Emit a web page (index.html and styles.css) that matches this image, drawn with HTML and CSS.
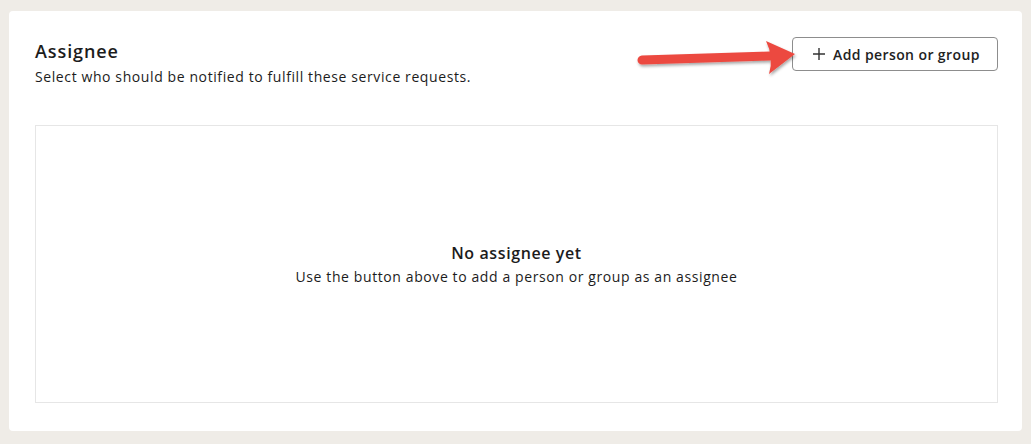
FILE: index.html
```html
<!DOCTYPE html>
<html>
<head>
    <title>Assignee</title>
    <link rel="stylesheet" href="styles.css">
</head>
<body>
    <div class="page">
        <div class="card">
            <div class="header">
                <div class="heading">
                    <h2 class="title">Assignee</h2>
                    <p class="subtitle">Select who should be notified to fulfill these service requests.</p>
                </div>
                <button class="add-button">
                    <svg class="plus" width="14" height="14" viewBox="0 0 14 14">
                        <path d="M7 1v12M1 7h12" stroke="#333" stroke-width="1.4" fill="none"/>
                    </svg>
                    Add person or group
                </button>
            </div>
            <div class="empty-box">
                <h3 class="empty-title">No assignee yet</h3>
                <p class="empty-text">Use the button above to add a person or group as an assignee</p>
            </div>
        </div>

        <!-- annotation arrow pointing at the button -->
        <svg class="arrow" width="180" height="50" viewBox="0 0 180 50">
            <defs>
                <filter id="shadow" x="-10%" y="-30%" width="130%" height="180%">
                    <feDropShadow dx="1" dy="2" stdDeviation="1.5" flood-color="#000" flood-opacity="0.35"/>
                </filter>
            </defs>
            <g filter="url(#shadow)">
                <line x1="12" y1="26" x2="140" y2="22" stroke="#ec4a41" stroke-width="9" stroke-linecap="round"/>
                <path d="M136 7 L165 20 L139 40 Q144 23 136 7 Z" fill="#ec4a41"/>
            </g>
        </svg>
    </div>
</body>
</html>
```

FILE: styles.css
```css
body {
    margin: 0;
    background-color: #efece7;
    font-family: 'Open Sans', sans-serif;
    color: #1c1c1c;
}

.page {
    position: relative;
    padding: 11px 9px 13px 9px;
}

.card {
    background-color: #fff;
    border-radius: 4px;
    padding: 26px 24px 28px 26px;
}

.header {
    display: flex;
    justify-content: space-between;
    align-items: flex-start;
}

.title {
    margin: 2px 0 0 0;
    font-size: 18px;
    line-height: 24px;
    font-weight: 600;
    letter-spacing: 0.9px;
}

.subtitle {
    margin: 4px 0 0 0;
    font-size: 14px;
    line-height: 20px;
    letter-spacing: 0.6px;
}

.add-button {
    display: flex;
    align-items: center;
    gap: 7px;
    width: 206px;
    height: 34px;
    padding: 0 0 0 19px;
    background-color: #fff;
    border: 1px solid #8d8d8d;
    border-radius: 4px;
    font-family: 'Open Sans', sans-serif;
    font-size: 14px;
    font-weight: 600;
    letter-spacing: 0.4px;
    color: #222;
    cursor: pointer;
}

.empty-box {
    margin-top: 38px;
    height: 276px;
    border: 1px solid #e6e6e6;
    display: flex;
    flex-direction: column;
    align-items: center;
    justify-content: center;
}

.empty-title {
    margin: 0;
    font-size: 16px;
    line-height: 22px;
    font-weight: 600;
    letter-spacing: 0.6px;
}

.empty-text {
    margin: 3px 0 0 0;
    font-size: 14px;
    line-height: 20px;
    letter-spacing: 0.6px;
}

.arrow {
    position: absolute;
    left: 630px;
    top: 34px;
}
```
